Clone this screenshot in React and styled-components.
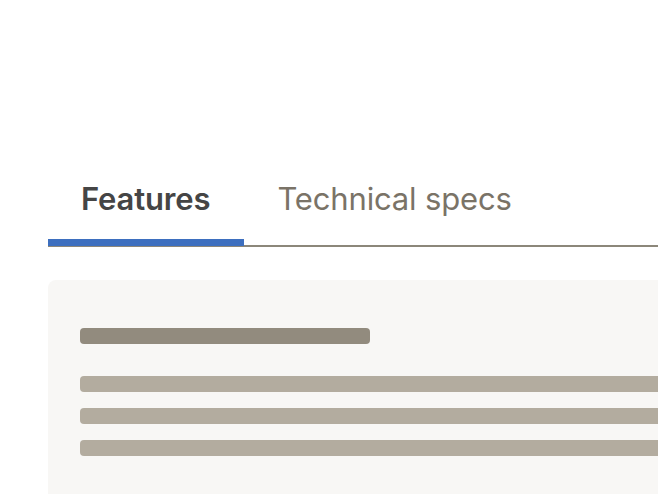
import React, { useState } from "react";
import styled, { createGlobalStyle } from "styled-components";

const GlobalStyle = createGlobalStyle`
  html, body {
    margin: 0;
    padding: 0;
    background: #ffffff;
    overflow: hidden;
  }
  body {
    font-family: Inter, "Noto Sans", "Liberation Sans", sans-serif;
  }
`

const Page = styled.div`
  width: 720px;
  padding: 153px 0 0 48px;
`

const TabList = styled.div`
  display: flex;
  border-bottom: 2px solid #8c877a;
`

const Tab = styled.button`
  position: relative;
  appearance: none;
  border: 0;
  background: none;
  margin: 0;
  padding: 26px 34px 26px 33px;
  font-family: inherit;
  font-size: 31px;
  line-height: 40px;
  letter-spacing: -0.15px;
  font-weight: ${(p) => (p.active ? 600 : 400)};
  color: ${(p) => (p.active ? "#454545" : "#7a7367")};
  cursor: pointer;

  &::after {
    content: "";
    position: absolute;
    left: 0;
    right: 0;
    bottom: -1px;
    height: 7px;
    background: ${(p) => (p.active ? "#3d6fbf" : "transparent")};
  }
`

const Panel = styled.div`
  margin-top: 33px;
  background: #f8f7f5;
  border-radius: 8px 8px 0 0;
  padding: 48px 0 64px 32px;
  display: flex;
  flex-direction: column;
  gap: 16px;
`

const Bar = styled.div`
  height: 16px;
  border-radius: 4px;
  width: ${(p) => p.width || "100%"};
  background: ${(p) => (p.title ? "#928b7e" : "#b3ac9f")};
  margin-bottom: ${(p) => (p.title ? "16px" : "0")};
`

const tabs = ["Features", "Technical specs"];

export default function App() {
  const [active, setActive] = useState(0);

  return (
    <>
      <GlobalStyle />
      <Page>
        <TabList>
          {tabs.map((t, i) => (
            <Tab key={t} active={i === active} onClick={() => setActive(i)}>
              {t}
            </Tab>
          ))}
        </TabList>
        <Panel>
          <Bar title="1" width="290px" />
          <Bar />
          <Bar />
          <Bar />
        </Panel>
      </Page>
    </>
  );
}
